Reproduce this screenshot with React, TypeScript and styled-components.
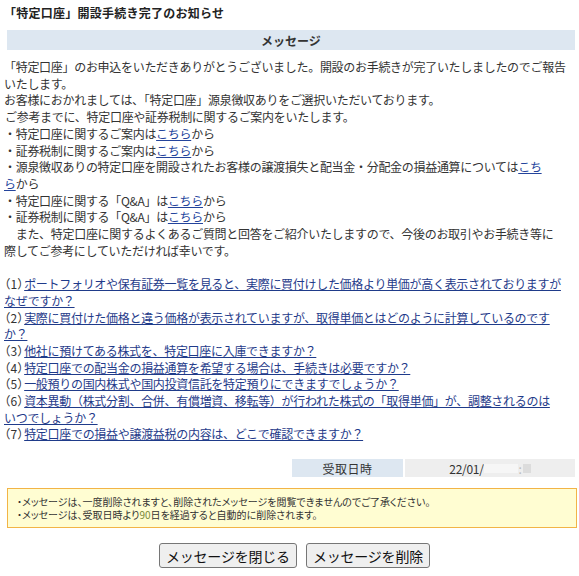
import React from "react";
import styled, { createGlobalStyle } from "styled-components";

const GlobalStyle = createGlobalStyle`
  html, body { margin: 0; padding: 0; background: #ffffff; }
  body {
    font-family: "Noto Sans CJK JP", "Noto Sans", sans-serif;
    color: #333333;
  }
`;

const Page = styled.div`
  width: 579px;
  box-sizing: border-box;
  padding: 4px 2px 0 4px;
`;

const Title = styled.h1`
  margin: 0;
  font-size: 12px;
  line-height: 17px;
  font-weight: bold;
  letter-spacing: 0.25px;
  color: #222;
`;

const SectionBar = styled.div`
  margin: 9px 2px 0 3px;
  height: 20px;
  background: #dde7f1;
  display: flex;
  align-items: center;
  justify-content: center;
  font-size: 12px;
  font-weight: bold;
  color: #333;
`;

const Body = styled.div`
  margin-top: 9px;
  font-size: 12px;
  line-height: 16.7px;
  letter-spacing: -0.3px;
  color: #333;
`;

const Line = styled.div<{ $indent?: boolean }>`
  white-space: nowrap;
  padding-left: ${(p) => (p.$indent ? "1px" : "0")};
`;

const Blank = styled.div`
  height: 16.7px;
`;

const Link = styled.a`
  color: #24449c;
  text-decoration: underline;
  cursor: pointer;
`;

const FaqLink = styled(Link)`
  color: #1f3b8a;
`;

const Num = styled.span`
  font-feature-settings: "palt";
  letter-spacing: 0.5px;
`;

const DateRow = styled.div`
  display: flex;
  justify-content: flex-end;
  gap: 2px;
  margin: 16px 2px 0 0;
  font-size: 12px;
  color: #333;
`;

const Cell = styled.div<{ $label?: boolean }>`
  width: ${(p) => (p.$label ? "111px" : "170px")};
  height: 18px;
  display: flex;
  align-items: center;
  justify-content: center;
  background: ${(p) => (p.$label ? "#dde7f1" : "#eeeeee")};
  letter-spacing: ${(p) => (p.$label ? "0.5px" : "-0.3px")};
`;

const Redacted = styled.span<{ $w: number; $tone: string }>`
  display: inline-block;
  width: ${(p) => p.$w}px;
  height: 9px;
  background: ${(p) => p.$tone};
`;

const Colon = styled.span`
  color: #bbb;
  padding: 0 1px;
`;

const Notice = styled.div`
  margin: 11px 0 0 3px;
  border: 1px solid #f2b446;
  background: #fffdd2;
  padding: 5.5px 9px;
  font-size: 10px;
  line-height: 13.5px;
  color: #333;
  font-feature-settings: "palt";
`;

const Digits = styled.span`
  color: #7a8a3a;
`;

const ButtonRow = styled.div`
  display: flex;
  justify-content: center;
  gap: 9px;
  margin-top: 15px;
  padding-left: 8px;
`;

const Button = styled.button`
  font-family: "Noto Sans CJK JP", sans-serif;
  font-size: 14px;
  height: 25px;
  padding: 0 6px;
  line-height: 1;
  background: #efefef;
  color: #111;
  border: 1px solid #767676;
  border-radius: 3px;
  letter-spacing: -0.2px;
`;

export default function App() {
  return (
    <>
      <GlobalStyle />
      <Page>
        <Title>「特定口座」開設手続き完了のお知らせ</Title>
        <SectionBar>メッセージ</SectionBar>
        <Body>
          <Line>「特定口座」のお申込をいただきありがとうございました。開設のお手続きが完了いたしましたのでご報告</Line>
          <Line>いたします。</Line>
          <Line>お客様におかれましては、「特定口座」源泉徴収ありをご選択いただいております。</Line>
          <Line $indent>ご参考までに、特定口座や証券税制に関するご案内をいたします。</Line>
          <Line>・特定口座に関するご案内は<Link>こちら</Link>から</Line>
          <Line>・証券税制に関するご案内は<Link>こちら</Link>から</Line>
          <Line>・源泉徴収ありの特定口座を開設されたお客様の譲渡損失と配当金・分配金の損益通算については<Link>こち</Link></Line>
          <Line><Link>ら</Link>から</Line>
          <Line>・特定口座に関する「Q&amp;A」は<Link>こちら</Link>から</Line>
          <Line>・証券税制に関する「Q&amp;A」は<Link>こちら</Link>から</Line>
          <Line>　また、特定口座に関するよくあるご質問と回答をご紹介いたしますので、今後のお取引やお手続き等に</Line>
          <Line>際してご参考にしていただければ幸いです。</Line>
          <Blank />
          <Line><Num>（1）</Num><FaqLink>ポートフォリオや保有証券一覧を見ると、実際に買付けした価格より単価が高く表示されておりますが</FaqLink></Line>
          <Line><FaqLink>なぜですか？</FaqLink></Line>
          <Line><Num>（2）</Num><FaqLink>実際に買付けた価格と違う価格が表示されていますが、取得単価とはどのように計算しているのです</FaqLink></Line>
          <Line><FaqLink>か？</FaqLink></Line>
          <Line><Num>（3）</Num><FaqLink>他社に預けてある株式を、特定口座に入庫できますか？</FaqLink></Line>
          <Line><Num>（4）</Num><FaqLink>特定口座での配当金の損益通算を希望する場合は、手続きは必要ですか？</FaqLink></Line>
          <Line><Num>（5）</Num><FaqLink>一般預りの国内株式や国内投資信託を特定預りにできますでしょうか？</FaqLink></Line>
          <Line><Num>（6）</Num><FaqLink>資本異動（株式分割、合併、有償増資、移転等）が行われた株式の「取得単価」が、調整されるのは</FaqLink></Line>
          <Line><FaqLink>いつでしょうか？</FaqLink></Line>
          <Line><Num>（7）</Num><FaqLink>特定口座での損益や譲渡益税の内容は、どこで確認できますか？</FaqLink></Line>
        </Body>
        <DateRow>
          <Cell $label>受取日時</Cell>
          <Cell>
            22/01/
            <Redacted $w={34} $tone="#f6f6f6" />
            <Colon>:</Colon>
            <Redacted $w={8} $tone="#dcdcdc" />
          </Cell>
        </DateRow>
        <Notice>
          <div>・メッセージは、一度削除されますと、削除されたメッセージを閲覧できませんのでご了承ください。</div>
          <div>・メッセージは、受取日時より<Digits>90</Digits>日を経過すると自動的に削除されます。</div>
        </Notice>
        <ButtonRow>
          <Button type="button">メッセージを閉じる</Button>
          <Button type="button">メッセージを削除</Button>
        </ButtonRow>
      </Page>
    </>
  );
}
